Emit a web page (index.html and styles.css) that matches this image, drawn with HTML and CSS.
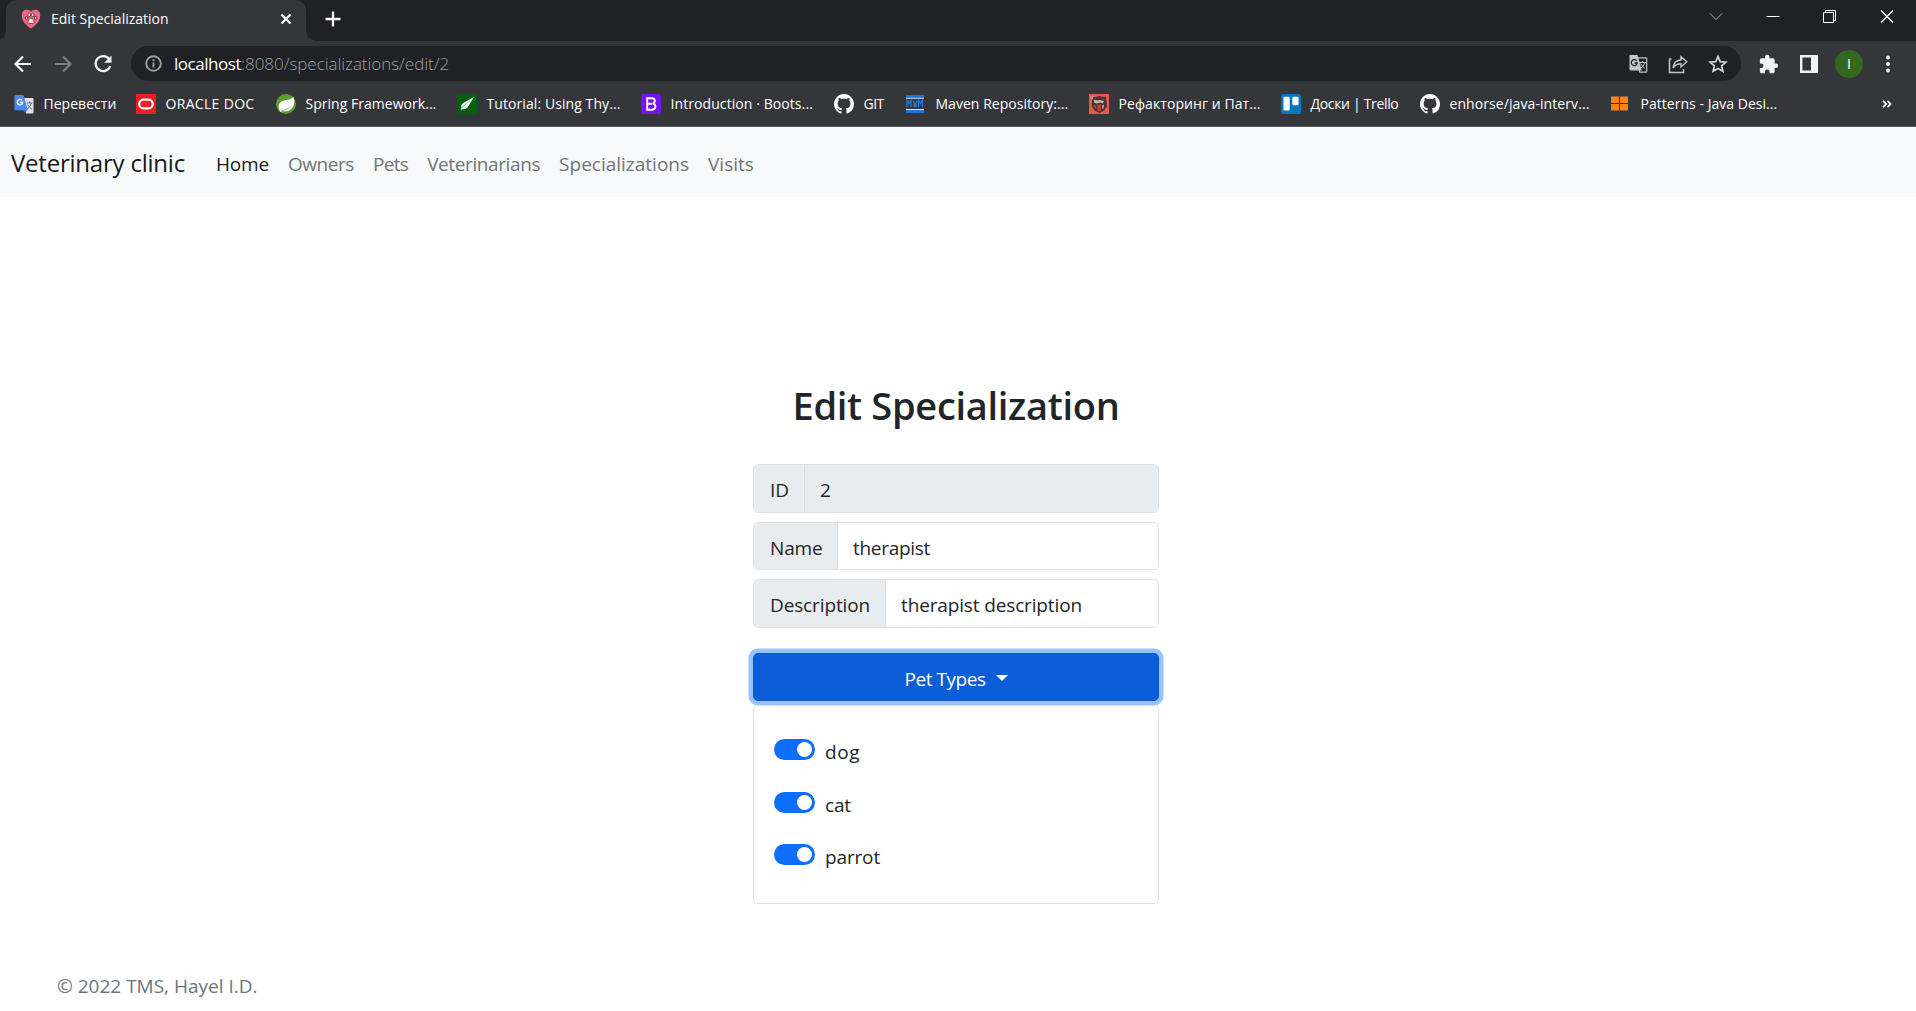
FILE: index.html
```html
<!DOCTYPE html>
<html lang="en">
<head>
<meta charset="utf-8">
<title>Edit Specialization</title>
<link rel="stylesheet" href="styles.css">
</head>
<body>
<svg class="defs" width="0" height="0" aria-hidden="true">
  <symbol id="github" viewBox="0 0 16 16"><path d="M8 0C3.58 0 0 3.58 0 8c0 3.54 2.29 6.53 5.47 7.59.4.07.55-.17.55-.38 0-.19-.01-.82-.01-1.49-2.01.37-2.53-.49-2.69-.94-.09-.23-.48-.94-.82-1.13-.28-.15-.68-.52-.01-.53.63-.01 1.08.58 1.23.82.72 1.21 1.87.87 2.33.66.07-.52.28-.87.51-1.07-1.78-.2-3.64-.89-3.64-3.95 0-.87.31-1.59.82-2.15-.08-.2-.36-1.02.08-2.12 0 0 .67-.21 2.2.82.64-.18 1.32-.27 2-.27s1.36.09 2 .27c1.53-1.04 2.2-.82 2.2-.82.44 1.1.16 1.92.08 2.12.51.56.82 1.27.82 2.15 0 3.07-1.87 3.75-3.65 3.95.29.25.54.73.54 1.48 0 1.07-.01 1.93-.01 2.2 0 .21.15.46.55.38A8.01 8.01 0 0 0 16 8c0-4.42-3.58-8-8-8z"/></symbol>
</svg>

<header class="browser">
  <div class="tabstrip">
    <div class="tab">
      <svg class="favicon" viewBox="0 0 20 20"><path d="M10 19.500C4 15.500.8 11.500.8 6.500.8 2.500 3 .8 5.500.8 7.500.8 9 1.500 10 2.700 11 1.500 12.500.8 14.500.8c2.500 0 4.700 1.700 4.700 5.700C19.200 11.500 16 15.500 10 19.500z" fill="#f7648b"/><g fill="#f6e3c8" stroke="#49302f" stroke-width=".8"><ellipse cx="8.200" cy="5.900" rx="1.300" ry="1.900"/><ellipse cx="11.800" cy="5.900" rx="1.300" ry="1.900"/><ellipse cx="5.500" cy="9" rx="1.200" ry="1.600"/><ellipse cx="14.500" cy="9" rx="1.200" ry="1.600"/><path d="M10 9c1.700 0 2.200 1.800 2.900 3 .7 1.300 0 2.500-1.200 2.500H8.300c-1.200 0-1.900-1.200-1.200-2.500C7.800 10.800 8.300 9 10 9z"/></g></svg>
      <span class="tab-title">Edit Specialization</span>
      <svg class="tab-close" viewBox="0 0 12 12"><path d="M1.500 1.500l9 9M10.500 1.500l-9 9" stroke="#fff" stroke-width="2.200"/></svg>
    </div>
    <svg class="new-tab" viewBox="0 0 16 16"><path d="M8 .5v15M.5 8h15" stroke="#fff" stroke-width="2.300"/></svg>
    <div class="window-controls">
      <svg viewBox="0 0 14 14"><path d="M1 3.500l6 6 6-6" stroke="#b9babc" fill="none"/></svg>
      <svg viewBox="0 0 14 14"><path d="M.5 6.500h13" stroke="#fff"/></svg>
      <svg viewBox="0 0 14 14"><path d="M.5 2.500h10v10H.5zM2.500 2.500v-2h10v10h-2" stroke="#fff" fill="none"/></svg>
      <svg viewBox="0 0 14 14"><path d="M1 .5l12 12M13 .5l-12 12" stroke="#fff" stroke-width="1.200"/></svg>
    </div>
  </div>

  <div class="toolbar">
    <div class="nav-buttons">
      <svg viewBox="0 0 20 20"><path d="M18 10H3M10 2.500L2.500 10l7.500 7.500" fill="none" stroke="#f1f3f4" stroke-width="2.200"/></svg>
      <svg viewBox="0 0 20 20"><path d="M2 10h15M10 2.500l7.500 7.500-7.500 7.500" fill="none" stroke="#7d7e81" stroke-width="2.200"/></svg>
      <svg viewBox="0 0 20 20"><path d="M16.300 5.200A7.500 7.500 0 1 0 17.300 12" fill="none" stroke="#f1f3f4" stroke-width="2.300"/><path d="M18.500 1.500v7.300h-7.300z" fill="#f1f3f4"/></svg>
    </div>
    <div class="omnibox">
      <svg class="info" viewBox="0 0 17 17"><circle cx="8.500" cy="8.500" r="7.300" fill="none" stroke="#9aa0a6" stroke-width="1.900"/><path d="M8.500 7.500v5M8.500 4.300v1.900" stroke="#9aa0a6" stroke-width="1.900"/></svg>
      <span class="url"><span class="host">localhost</span><span class="path">:8080/specializations/edit/2</span></span>
      <div class="page-actions">
        <svg viewBox="0 0 20 20"><path d="M1.500 1h8l4.300 15.500H3A1.500 1.500 0 0 1 1.500 15z" fill="#c4c5c7"/><path d="M9.500 3.800h8.300q.9 0 .9.900v12.600q0 .9-.9.900h-6l-1-3.500" fill="none" stroke="#c4c5c7" stroke-width="1.200"/><path d="M11 8.500h7M14.500 7v1.500M17 8.500q-1 4-4.500 6M12.500 9.500q2 3 4.500 5" fill="none" stroke="#c4c5c7"/><path d="M8.700 6.800a3 3 0 1 0 .6 2.200H6.500" fill="none" stroke="#202124" stroke-width="1.300"/></svg>
        <svg viewBox="0 0 20 20"><path d="M3.500 5H1.500v13.500h14V15" fill="none" stroke="#c4c5c7" stroke-width="1.500"/><path d="M5 14c.6-5 3.500-8 8-8V2.500l5.700 5.200L13 13V9.800C9.500 9.800 7 11 5 14z" fill="none" stroke="#c4c5c7" stroke-width="1.400"/></svg>
        <svg viewBox="0 0 20 20"><path d="M10 2.400l2.200 5.200 5.700.5-4.300 3.700 1.300 5.500-4.900-2.900-4.900 2.900 1.300-5.500L2.100 8.100l5.700-.5z" fill="none" stroke="#d0d1d3" stroke-width="1.700"/></svg>
      </div>
    </div>
    <div class="toolbar-actions">
      <svg class="action" viewBox="1 0 23 23"><path d="M20.500 11H19V7c0-1.100-.9-2-2-2h-4V3.500a2.500 2.500 0 0 0-5 0V5H4c-1.100 0-2 .9-2 2v3.800h1.500a2.700 2.700 0 0 1 0 5.400H2V20c0 1.100.9 2 2 2h3.800v-1.500a2.700 2.700 0 0 1 5.400 0V22H17c1.100 0 2-.9 2-2v-4h1.500a2.500 2.500 0 0 0 0-5z" fill="#f1f3f4"/></svg>
      <svg class="action" viewBox="0 0 20 20"><path d="M2.200 2.200h15.600v15.600H2.200z" fill="none" stroke="#f1f3f4" stroke-width="2.400"/><path d="M12 2h6v16h-6z" fill="#f1f3f4"/></svg>
      <span class="avatar">I</span>
      <svg class="menu" viewBox="0 0 6 18"><circle cx="3" cy="2.500" r="2"/><circle cx="3" cy="9" r="2"/><circle cx="3" cy="15.500" r="2"/></svg>
    </div>
  </div>

  <nav class="bookmarks">
    <a class="bookmark"><svg viewBox="0 0 20 20"><path d="M8 4h10.500q1 0 1 1v13.500q0 1-1 1H12z" fill="#dfe1e5"/><path d="M9 16h4l-1.500 3.500z" fill="#3367d6"/><path d="M1.500 1h8l4.300 15.300H1.500q-1 0-1-1V2q0-1 1-1z" fill="#4a8af4"/><path d="M8 6.300A2.700 2.700 0 1 0 8.700 8.500H6" fill="none" stroke="#fff" stroke-width="1.300"/><path d="M12.500 9h6M15.500 7.500V9M17.500 9q-1 4-4.500 6M13.500 10.500q2 3 4.500 5" fill="none" stroke="#607988"/></svg><span>Перевести</span></a>
    <a class="bookmark oracle"><svg viewBox="0 0 20 20"><path d="M0 0h20v20H0z" fill="#ee1c24"/><rect x="3.200" y="5.700" width="13.600" height="8.600" rx="4.300" fill="none" stroke="#fff" stroke-width="2.200"/></svg><span>ORACLE DOC</span></a>
    <a class="bookmark"><svg viewBox="0 0 20 20"><circle cx="10" cy="10" r="10" fill="#5a9e30"/><path d="M17.500 2.500c1.300 5 1 9-1.500 11.800-3 3.200-8 3.500-11.500 2.700 5-.3 8.500-2 10.500-5.500-3.500 3.500-6.500 4.700-11.500 4.700C1.500 11 3.500 7.500 8 6.500c3.500-.8 7.500-.5 9.500-4z" fill="#fff"/><circle cx="4.600" cy="17" r="1" fill="#fff"/></svg><span>Spring Framework...</span></a>
    <a class="bookmark loose"><svg viewBox="0 0 20 20"><path d="M0 0h20v20H0z" fill="#005f0f"/><path d="M17 3L7 8.500c-2.500 1.500-3.500 3.500-2.500 5.200l-1 2.500 2-1.200c3 .8 4.800-.5 6-3z" fill="#fff"/><path d="M16.500 3.500L5 14.200l-.7-1.200z" fill="#9db39f"/></svg><span>Tutorial: Using Thy...</span></a>
    <a class="bookmark loose"><svg viewBox="0 0 20 20"><rect width="20" height="20" rx="2.500" fill="#7613f5"/><path d="M6.200 4.300h4.500c4 0 4 4.500 1 5.300 4 .7 3.500 6.100-1 6.100H6.200zM6.500 9.800h4.500" fill="none" stroke="#fff" stroke-width="1.900"/></svg><span>Introduction · Boots...</span></a>
    <a class="bookmark git"><svg fill="#fff"><use href="#github"/></svg><span>GIT</span></a>
    <a class="bookmark"><svg viewBox="0 0 20 20"><path d="M0 1h18v2.800H0zM0 16h18v3H0z" fill="#1976dd"/><path d="M0 3.800h18v1H0zM0 15h18v1H0z" fill="#d8e6f6"/><path d="M1 13.500v-7l2 3 2-3v7M7 6.500l2 5 2-5M8 13.500V10M10 13.500V10M12.500 13.500v-7l2 3 2-3v7" fill="none" stroke="#1976dd" stroke-width="1.400"/></svg><span>Maven Repository:...</span></a>
    <a class="bookmark loose"><svg viewBox="0 0 20 20"><path d="M0 0h20v20H0z" fill="#e9594b"/><path d="M2.500 2l3 1.500L10 2l5 1 2-.5.500 5 .5 5-3 4-4 2.500-5-2-3-4.500z" fill="#493634"/><path d="M5 5.500l3 1 3-.500 4 1-1 2.500-3-1-3 1-3-1z" fill="#c3b4a4"/><path d="M8 10.500h4v6l-2 1.500-2-2z" fill="#c9352b"/><path d="M1.500 2.500l2.500-1v3L2.500 7zM13 11.500l2-1v3l-2 1.500zM5 11l1.500 1v3z" fill="#a8a19b"/></svg><span>Рефакторинг и Пат...</span></a>
    <a class="bookmark trello"><svg viewBox="0 0 20 20"><rect width="20" height="20" rx="2.800" fill="#0079bf"/><rect x="2.500" y="2.800" width="6.200" height="13.700" rx="1.200" fill="#fff"/><rect x="11.300" y="2.800" width="6.200" height="8.500" rx="1.200" fill="#fff"/></svg><span>Доски | Trello</span></a>
    <a class="bookmark loose"><svg fill="#fff"><use href="#github"/></svg><span>enhorse/java-interv...</span></a>
    <a class="bookmark"><svg viewBox="0 0 20 20"><path d="M0 2.500h8v6.500H0zM9 2.500h8v6.500H9zM0 10h8v6.500H0zM9 10h8v6.500H9z" fill="#f98313"/></svg><span>Patterns - Java Desi...</span></a>
    <svg class="overflow" viewBox="0 0 10 8"><path d="M1 .8L4.200 4 1 7.200M5.300.8L8.500 4 5.300 7.200" fill="none" stroke="#fff" stroke-width="1.700"/></svg>
  </nav>
</header>

<nav class="navbar">
  <a class="brand">Veterinary clinic</a>
  <a class="nav-link home active">Home</a>
  <a class="nav-link owners">Owners</a>
  <a class="nav-link pets">Pets</a>
  <a class="nav-link vets">Veterinarians</a>
  <a class="nav-link">Specializations</a>
  <a class="nav-link">Visits</a>
</nav>

<main class="content">
  <h1>Edit Specialization</h1>
  <form class="form">
    <div class="input-group disabled"><label class="id">ID</label><div class="control">2</div></div>
    <div class="input-group"><label class="name">Name</label><div class="control therapist">therapist</div></div>
    <div class="input-group"><label class="description">Description</label><div class="control">therapist description</div></div>
    <button type="button" class="toggle"><span>Pet Types</span><i class="caret"></i></button>
    <div class="dropdown">
      <label class="option dog"><i class="switch"></i><span>dog</span></label>
      <label class="option"><i class="switch"></i><span>cat</span></label>
      <label class="option"><i class="switch"></i><span>parrot</span></label>
    </div>
  </form>
</main>
<footer class="footer">© 2022 TMS, Hayel I.D.</footer>
</body>
</html>
```
FILE: styles.css
```css
* { box-sizing: border-box; }
html, body { height: 100%; }
body {
  margin: 0;
  display: flex;
  flex-direction: column;
  overflow: hidden;
  background: #fff;
  color: #212529;
  font: 19px/24px "Open Sans", "Noto Sans", sans-serif;
  white-space: nowrap;
}
svg { display: block; flex: none; }
.defs { display: none; }

/* Browser window */
.browser {
  height: 127px;
  flex: none;
  background: #35363a;
  border-bottom: 1px solid #5d5e62;
  color: #fff;
  font-size: 14px;
}
.tabstrip {
  height: 41px;
  display: flex;
  align-items: center;
  background: #202124;
  padding-left: 6px;
}
.tab {
  position: relative;
  width: 300px;
  height: 41px;
  display: flex;
  align-items: center;
  padding: 0 14px 4px 15px;
  border-radius: 10px 10px 0 0;
  background: #35363a;
}
.tab::before, .tab::after {
  content: "";
  position: absolute;
  bottom: 0;
  width: 10px;
  height: 10px;
}
.tab::before { right: 100%; background: radial-gradient(circle at 0 0, transparent 9.500px, #35363a 10px); }
.tab::after { left: 100%; background: radial-gradient(circle at 100% 0, transparent 9.500px, #35363a 10px); }
.favicon { width: 20px; height: 20px; }
.tab-title { margin-left: 10px; }
.tab-close { width: 12px; height: 12px; margin-left: auto; }
.new-tab { width: 16px; height: 16px; margin: 0 0 3px 19px; }
.window-controls { display: flex; gap: 43px; margin: 0 22px 8px auto; }
.window-controls svg { width: 14px; height: 14px; }

.toolbar { height: 45px; display: flex; align-items: center; }
.nav-buttons { display: flex; gap: 20px; width: 131px; padding-left: 13px; }
.nav-buttons svg { width: 20px; height: 20px; }
.omnibox {
  width: 1610px;
  height: 35px;
  display: flex;
  align-items: center;
  border-radius: 18px;
  background: #202124;
  padding: 0 13px 0 14px;
}
.info { width: 17px; height: 17px; }
.url { margin-left: 12px; font-size: 17px; font-weight: 300; }
.host { font-weight: 400; letter-spacing: -.47px; }
.path { color: #9aa0a6; letter-spacing: -.04px; }
.page-actions { display: flex; gap: 20px; margin-left: auto; }
.page-actions svg { width: 20px; height: 20px; }
.toolbar-actions { display: flex; align-items: center; margin-left: 18px; }
.action { width: 20px; height: 20px; margin-right: 20px; }
.avatar {
  width: 28px;
  height: 28px;
  margin-left: -4px;
  border-radius: 50%;
  background: #33691e;
  text-align: center;
  line-height: 28px;
}
.menu { width: 6px; height: 18px; margin-left: 22px; fill: #f1f3f4; }

.bookmarks {
  height: 40px;
  display: grid;
  grid-template-columns: 122px 140px 181px 184px 193px 72px 183px 192px 139px 191px 1fr auto;
  align-items: center;
  padding: 0 24px 4px 14px;
}
.bookmark { display: flex; align-items: center; gap: 9.500px; }
.bookmark svg { width: 20px; height: 20px; }
.bookmark span { letter-spacing: .03px; }
.loose span { letter-spacing: .08px; }
.oracle span { letter-spacing: .32px; }
.git span { letter-spacing: -.5px; }
.trello span { letter-spacing: -.33px; }
.bookmarks .overflow { width: 10px; height: 8px; }

/* Site navigation */
.navbar {
  height: 70px;
  flex: none;
  display: flex;
  align-items: center;
  gap: 19px;
  padding: 3px 11px 0;
  background: #f8f9fa;
  color: #737475;
}
.brand { width: 186px; padding-bottom: 2px; font-size: 24px; letter-spacing: -.22px; color: #17191b; }
.home { letter-spacing: -.18px; }
.owners { letter-spacing: -.44px; }
.pets { letter-spacing: -.7px; }
.vets { letter-spacing: -.39px; }
.active { color: #17191b; }

/* Edit form */
.content { width: 406px; margin: 0 0 0 753px; padding-top: 181px; }
h1 {
  margin: 0 0 32px;
  font-size: 38px;
  font-weight: 600;
  line-height: 54px;
  letter-spacing: -.3px;
  text-align: center;
}
.form { display: flex; flex-direction: column; }
.input-group {
  display: flex;
  height: 49px;
  margin-bottom: 9px;
  border: 1px solid #dde1e6;
  border-radius: 5px;
  overflow: hidden;
}
.input-group:nth-child(2) { height: 48px; }
.input-group label {
  display: flex;
  align-items: center;
  padding: 3px 0 0 16px;
  background: #e9ecef;
  border-right: 1px solid #dadfe3;
  letter-spacing: -.13px;
}
.id { width: 51px; }
.name { width: 84px; }
.description { width: 132px; }
.control { flex: 1; display: flex; align-items: center; padding: 3px 15px 0; letter-spacing: -.14px; }
.therapist { letter-spacing: -.3px; }
.disabled .control { background: #e9ecef; }
.toggle {
  display: flex;
  align-items: center;
  justify-content: center;
  height: 48px;
  margin-top: 16px;
  padding: 3px 0 0;
  border: 1px solid #0a58ca;
  border-radius: 5px;
  background: #0b5ed7;
  box-shadow: 0 0 0 4.500px #98c1fe;
  color: #fff;
  font: inherit;
  letter-spacing: -.46px;
}
.caret { margin: -2px 0 0 10px; border: 6px solid transparent; border-top-color: #fff; border-bottom: 0; }
.dropdown {
  height: 199px;
  margin-top: 4px;
  padding: 32px 20px;
  border: 1px solid #e0e0e0;
  border-radius: 5px;
  background: #fff;
  z-index: 1;
}
.option { display: flex; height: 52.500px; gap: 10px; letter-spacing: -.15px; }
.option span { padding-top: 2px; }
.dog { letter-spacing: .6px; }
.switch {
  display: flex;
  justify-content: flex-end;
  width: 41px;
  height: 21px;
  margin-top: 1px;
  padding: 3px;
  border-radius: 11px;
  background: #0d6efd;
}
.switch::before { content: ""; width: 15px; height: 15px; border-radius: 50%; background: #fff; }
.footer { margin: auto 0 0 57px; height: 37px; color: #6c757d; }
```
